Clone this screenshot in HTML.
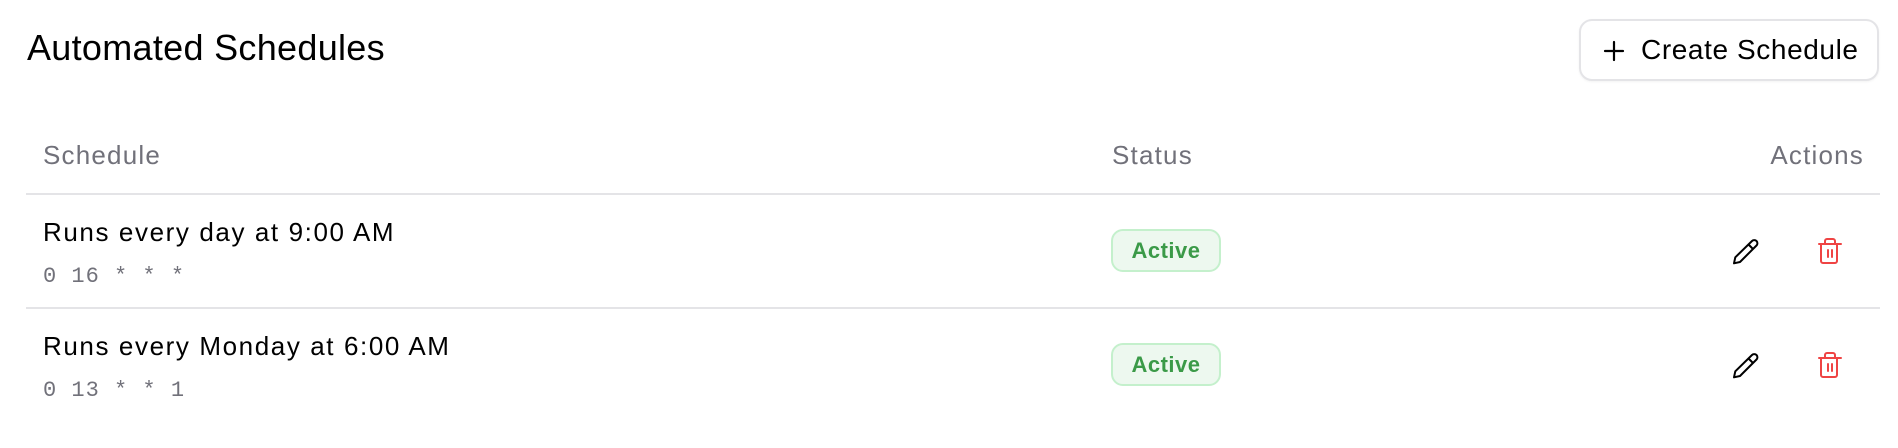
<!DOCTYPE html>
<html><head><meta charset="utf-8">
<style>
*{margin:0;padding:0;box-sizing:border-box}
body{width:1898px;height:448px;background:#fff;font-family:"Liberation Sans",sans-serif;position:relative;overflow:hidden;color:#000}
.a{position:absolute;white-space:nowrap;line-height:1}
.h1{left:27px;top:30px;font-size:36px;letter-spacing:.3px}
.th{font-size:26px;color:#71717a;top:142px;letter-spacing:1.2px}
.line{position:absolute;left:26px;width:1854px;height:2px;background:#e4e4e7}
.r{font-size:26px;left:43px;letter-spacing:1.6px}
.m{font-family:"Liberation Mono",monospace;font-size:22px;color:#71717a;left:43px;letter-spacing:1px}
.btn{position:absolute;left:1579px;top:19px;width:300px;height:62px;border:2px solid #e4e4e7;border-radius:13px;box-shadow:0 1px 2px rgba(0,0,0,.05)}
.badge{position:absolute;left:1111px;width:110px;height:43px;border:2px solid #c4f0cc;background:#edf8ef;border-radius:12px;color:#3b9a48;font-weight:bold;font-size:22px;letter-spacing:.5px;text-align:center;line-height:39px}
</style></head><body>
<div class="a h1">Automated Schedules</div>
<div class="btn"></div>
<svg class="a" style="left:1603px;top:40px" width="22" height="22" viewBox="0 0 22 22"><path d="M11 2V20M2 11H20" stroke="#000" stroke-width="2.2" stroke-linecap="round"/></svg>
<div class="a" style="left:1641px;top:36px;font-size:28px;letter-spacing:.6px">Create Schedule</div>
<div class="a th" style="left:43px">Schedule</div>
<div class="a th" style="left:1112px">Status</div>
<div class="a th" style="right:34px">Actions</div>
<div class="line" style="top:193px"></div>
<div class="line" style="top:307px"></div>
<div class="a r" style="top:219px">Runs every day at 9:00 AM</div>
<div class="a m" style="top:266px">0 16 * * *</div>
<div class="a r" style="top:333px">Runs every Monday at 6:00 AM</div>
<div class="a m" style="top:380px">0 13 * * 1</div>
<div class="badge" style="top:229px">Active</div>
<div class="badge" style="top:343px">Active</div>
<svg class="a" style="left:0;top:0" width="1898" height="448">
<g id="ic" fill="none" stroke-linecap="round" stroke-linejoin="round" stroke-width="2">
<path d="M1752 241a3 3 0 0 1 4.5 4.5L1740 262l-6 1.3 1.3-6Z M1749 245l4 4" stroke="#000"/>
<path d="M1819 244h22 M1837 244v17a2 2 0 0 1-2 2h-12a2 2 0 0 1-2-2v-17 M1825 244v-3a2 2 0 0 1 2-2h6a2 2 0 0 1 2 2v3 M1828 250v7 M1832 250v7" stroke="#ef4444"/>
</g>
<use href="#ic" y="114"/>
</svg>
</body></html>
